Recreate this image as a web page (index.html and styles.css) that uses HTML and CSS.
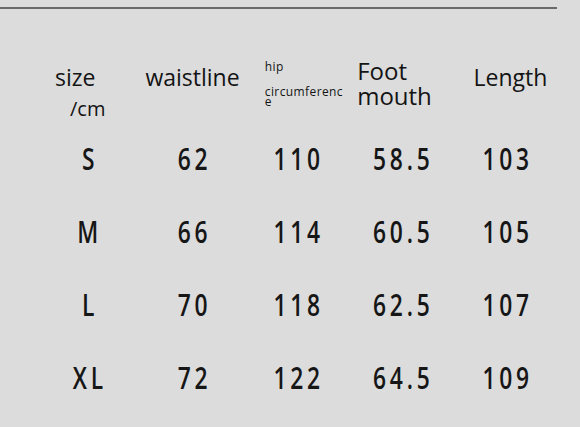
FILE: index.html
```html
<!DOCTYPE html>
<html>
<head>
<meta charset="utf-8">
<link rel="stylesheet" href="styles.css">
</head>
<body>
<div class="rule"></div>
<div class="table">
  <div class="head h-size"><div class="big">size</div><div class="unit">/cm</div></div>
  <div class="head h-waist"><div class="big">waistline</div></div>
  <div class="head h-hip"><div class="tiny">hip</div><div class="tiny wrap">circumference</div></div>
  <div class="head h-foot"><div class="foot">Foot mouth</div></div>
  <div class="head h-len"><div class="big">Length</div></div>

  <div class="num"><span>S</span></div><div class="num"><span>62</span></div><div class="num"><span>110</span></div><div class="num"><span>58.5</span></div><div class="num"><span>103</span></div>
  <div class="num"><span>M</span></div><div class="num"><span>66</span></div><div class="num"><span>114</span></div><div class="num"><span>60.5</span></div><div class="num"><span>105</span></div>
  <div class="num"><span>L</span></div><div class="num"><span>70</span></div><div class="num"><span>118</span></div><div class="num"><span>62.5</span></div><div class="num"><span>107</span></div>
  <div class="num"><span>XL</span></div><div class="num"><span>72</span></div><div class="num"><span>122</span></div><div class="num"><span>64.5</span></div><div class="num"><span>109</span></div>
</div>
</body>
</html>
```
FILE: styles.css
```css
html, body {
  margin: 0;
  padding: 0;
  background: #dcdcdc;
  width: 580px;
  height: 427px;
  overflow: hidden;
  color: #141414;
}
.rule {
  margin-top: 7px;
  width: 557px;
  height: 2px;
  background: #6a6a6a;
}
.table {
  margin-top: 47px;
  margin-left: 36px;
  width: 522px;
  display: grid;
  grid-template-columns: repeat(5, 104.4px);
  grid-template-rows: 65.5px repeat(4, 73px);
}
.head {
  font-family: "Open Sans", "Noto Sans", sans-serif;
}
.big {
  font-size: 23px;
  line-height: 23px;
  padding-top: 10px;
}
.unit {
  font-size: 20px;
  line-height: 20px;
  margin-top: 10px;
  padding-left: 15px;
}
.h-size { padding-left: 19px; }
.h-waist { padding-left: 5px; }
.h-hip { padding-left: 20px; padding-top: 5px; }
.h-foot { padding-left: 8px; padding-top: 2px; }
.h-len { padding-left: 20px; }
.tiny {
  font-size: 12px;
  line-height: 12px;
  letter-spacing: 0.4px;
}
.wrap {
  margin-top: 14px;
  line-height: 10px;
  width: 84px;
  word-break: break-all;
}
.foot {
  font-size: 24px;
  line-height: 25px;
  width: 80px;
}
.num {
  font-family: "Open Sans", "Noto Sans", sans-serif;
  font-weight: 600;
  font-size: 30px;
  line-height: 73px;
  text-align: center;
  color: #161616;
}
.num span {
  display: inline-block;
  letter-spacing: 5px;
  padding-left: 5px;
  transform: scaleX(0.76);
}
```
